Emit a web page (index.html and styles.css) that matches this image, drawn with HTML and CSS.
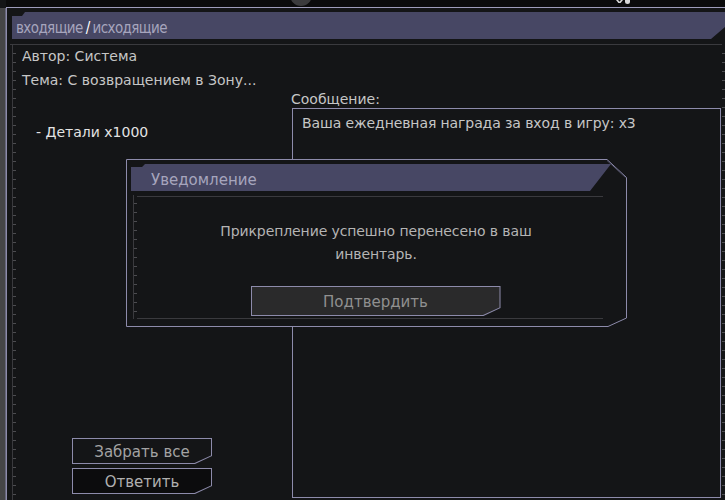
FILE: index.html
```html
<!DOCTYPE html>
<html lang="ru">
<head>
    <meta charset="UTF-8">
    <title>Почта</title>
    <link rel="stylesheet" href="styles.css">
</head>
<body>
    <div class="topbar">
        <span class="knob"></span>
        <span class="topicon cross"></span>
        <span class="topicon dot"></span>
    </div>
    <div class="screen">
        <div class="edge"></div>
        <div class="window">
            <div class="tabs">
                <span class="tab">входящие</span><span class="slash">/</span><span class="tab">исходящие</span>
            </div>
            <div class="divider"></div>
            <div class="panel">
                <div class="ticks"></div>
                <div class="main">
                    <div class="meta">Автор: Система</div>
                    <div class="meta">Тема: С возвращением в Зону...</div>
                    <div class="columns">
                        <div class="left">
                            <div class="item">- Детали x1000</div>
                            <div class="actions">
                                <button class="btn">
                                    <span>Забрать все</span>
                                </button>
                                <button class="btn dark">
                                    <span>Ответить</span>
                                </button>
                            </div>
                        </div>
                        <div class="right">
                            <div class="label">Сообщение:</div>
                            <div class="message">Ваша ежедневная награда за вход в игру: x3</div>
                        </div>
                    </div>
                </div>
                <div class="ticks right-ticks"></div>
            </div>
        </div>
    </div>

    <div class="dialog">
        <svg class="dialog-frame" width="501" height="168" viewBox="0 0 501 168">
            <polygon points="0.5,0.5 481,0.5 500.5,18.5 500.5,159 482,167.5 0.5,167.5" fill="#141517" stroke="#8d8bab" stroke-width="1"/>
            <polyline points="481,1.5 499.5,18.5" fill="none" stroke="#4a4a60" stroke-width="1"/>
        </svg>
        <div class="dialog-head">Уведомление</div>
        <div class="dialog-body">
            <div class="ticks"></div>
            <div class="dialog-content">
                <p class="dialog-text">Прикрепление успешно перенесено в ваш инвентарь.</p>
                <button class="btn confirm">
                    <span>Подтвердить</span>
                </button>
            </div>
        </div>
    </div>
</body>
</html>
```

FILE: styles.css
```css
body {
  margin: 0;
  width: 725px;
  height: 500px;
  overflow: hidden;
  background-color: #141517;
  font-family: "DejaVu Sans", "Noto Sans", sans-serif;
  font-size: 14px;
  color: #c6c6c6;
  display: flex;
  flex-direction: column;
}

.topbar {
  height: 7px;
  background: #0b0b0c;
  border-bottom: 1px solid #9e9cbb;
  margin-left: 6px;
  display: flex;
  overflow: hidden;
}

.knob {
  width: 22px;
  height: 22px;
  border-radius: 50%;
  background: #3b3b3d;
  margin-left: 284px;
  margin-top: -16px;
}

.topicon {
  background: #d8d8d8;
}

.topicon.cross {
  width: 7px;
  height: 3px;
  margin-left: 304px;
  clip-path: polygon(0 0, 30% 0, 50% 60%, 70% 0, 100% 0, 65% 100%, 35% 100%);
}

.topicon.dot {
  width: 5px;
  height: 4px;
  margin-left: 2px;
  border-radius: 0 0 3px 3px;
}

.screen {
  flex: 1;
  display: flex;
  min-height: 0;
}

.edge {
  width: 5px;
  background: #454547;
  border-right: 1px solid #66667a;
}

.window {
  flex: 1;
  border-left: 1px solid #8d8bab;
  padding: 4px 0 0 5px;
  display: flex;
  flex-direction: column;
}

.tabs {
  height: 27px;
  background: #474764;
  clip-path: polygon(0 4px, 10px 4px, 13px 0, 100% 0, 100% 15px, calc(100% - 14px) 100%, 0 100%);
  font-family: "DejaVu Sans Condensed", "DejaVu Sans", sans-serif;
  font-size: 15px;
  line-height: 27px;
  padding: 3px 0 0 4px;
  box-sizing: border-box;
  color: #a6a5bd;
  letter-spacing: -0.6px;
}

.slash {
  color: #ffffff;
  margin: 0 3px;
}

.divider {
  height: 1px;
  background: #3a3a3e;
  margin: 5px 3px 0 -2px;
}

.panel {
  flex: 1;
  display: flex;
  min-height: 0;
}

.ticks {
  width: 4px;
  background:
    linear-gradient(#3a3a3e, #3a3a3e) left top / 1px 100% no-repeat,
    repeating-linear-gradient(to bottom, transparent 0 8px, #4c4c50 8px 9px);
}

.right-ticks {
  width: 3px;
  background: repeating-linear-gradient(to bottom, transparent 0 8px, #4c4c50 8px 9px);
}

.main {
  flex: 1;
  padding: 0 1px 2px 6px;
  display: flex;
  flex-direction: column;
  min-width: 0;
}

.meta {
  line-height: 24px;
}

.meta:first-child {
  margin-top: -1px;
}

.columns {
  flex: 1;
  display: grid;
  grid-template-columns: 269px 1fr;
  min-height: 0;
}

.left {
  display: flex;
  flex-direction: column;
}

.item {
  color: #e4e4e4;
  margin: 33px 0 0 14px;
  line-height: 14px;
}

.actions {
  margin: auto 0 4px 50px;
  display: flex;
  flex-direction: column;
  gap: 4px;
}

.right {
  display: flex;
  flex-direction: column;
}

.label {
  line-height: 14px;
}

.message {
  flex: 1;
  margin: 2px 0 0 1px;
  border: 1px solid #8d8bab;
  padding: 5px 9px;
  line-height: 18px;
  letter-spacing: -0.1px;
}

/* angled buttons: outer layer is the border, inner span the fill */
.btn {
  display: block;
  padding: 1px;
  border: none;
  background: #8d8bab;
  width: 140px;
  height: 26px;
  font: inherit;
  cursor: pointer;
  clip-path: polygon(0 0, 100% 0, 100% calc(100% - 8px), calc(100% - 17px) 100%, 0 100%);
}

.btn span {
  display: flex;
  align-items: center;
  justify-content: center;
  height: 100%;
  box-sizing: border-box;
  padding-top: 2px;
  background: #141517;
  color: #a3a3a3;
  font-size: 15px;
  clip-path: polygon(0 0, 100% 0, 100% calc(100% - 7.5px), calc(100% - 16.5px) 100%, 0 100%);
}

.btn.dark span {
  background: #0c0c0d;
  color: #b0b0b0;
}

.dialog {
  position: absolute;
  left: 126px;
  top: 159px;
  width: 501px;
  height: 168px;
}

.dialog-frame {
  position: absolute;
  left: 0;
  top: 0;
}

.dialog-head {
  position: relative;
  margin: 5px 0 0 5px;
  width: 480px;
  height: 27px;
  background: #474764;
  clip-path: polygon(0 3px, 11px 3px, 14px 0, 100% 0, calc(100% - 21px) 100%, 0 100%);
  color: #a6a5bd;
  font-size: 15px;
  line-height: 33px;
  padding-left: 20px;
  box-sizing: border-box;
}

.dialog-body {
  position: relative;
  display: flex;
  margin: 4px 0 0 7px;
  height: 124px;
}

.dialog-content {
  width: 466px;
  border-top: 1px solid #3a3a3e;
  border-bottom: 1px solid #3a3a3e;
  margin-top: 1px;
  display: flex;
  flex-direction: column;
  align-items: center;
}

.dialog-text {
  margin: 23px 0 0 12px;
  width: 330px;
  text-align: center;
  line-height: 23px;
  color: #b4b4b4;
  letter-spacing: -0.1px;
}

.btn.confirm {
  width: 250px;
  height: 30px;
  margin: 20px 0 0 11px;
}

.btn.confirm span {
  background: #2a2a2b;
  color: #909090;
}
```
